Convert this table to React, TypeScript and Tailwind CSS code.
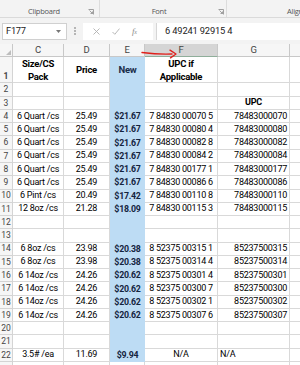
import React from "react";

type Row = {
  n: number;
  c?: string;
  d?: string;
  e?: string;
  f?: string;
  g?: string;
  gLeft?: boolean;
  gBold?: boolean;
};

const rows: Row[] = [
  { n: 2 },
  { n: 3, g: "UPC", gBold: true },
  { n: 4, c: "6 Quart /cs", d: "25.49", e: "$21.67", f: "7 84830 00070 5", g: "78483000070" },
  { n: 5, c: "6 Quart /cs", d: "25.49", e: "$21.67", f: "7 84830 00080 4", g: "78483000080" },
  { n: 6, c: "6 Quart /cs", d: "25.49", e: "$21.67", f: "7 84830 00082 8", g: "78483000082" },
  { n: 7, c: "6 Quart /cs", d: "25.49", e: "$21.67", f: "7 84830 00084 2", g: "78483000084" },
  { n: 8, c: "6 Quart /cs", d: "25.49", e: "$21.67", f: "7 84830 00177 1", g: "78483000177" },
  { n: 9, c: "6 Quart /cs", d: "25.49", e: "$21.67", f: "7 84830 00086 6", g: "78483000086" },
  { n: 10, c: "6 Pint /cs", d: "20.49", e: "$17.42", f: "7 84830 00110 8", g: "78483000110" },
  { n: 11, c: "12 8oz /cs", d: "21.28", e: "$18.09", f: "7 84830 00115 3", g: "78483000115" },
  { n: 12 },
  { n: 13 },
  { n: 14, c: "6 8oz /cs", d: "23.98", e: "$20.38", f: "8 52375 00315 1", g: "85237500315" },
  { n: 15, c: "6 8oz /cs", d: "23.98", e: "$20.38", f: "8 52375 00314 4", g: "85237500314" },
  { n: 16, c: "6 14oz /cs", d: "24.26", e: "$20.62", f: "8 52375 00301 4", g: "85237500301" },
  { n: 17, c: "6 14oz /cs", d: "24.26", e: "$20.62", f: "8 52375 00300 7", g: "85237500300" },
  { n: 18, c: "6 14oz /cs", d: "24.26", e: "$20.62", f: "8 52375 00302 1", g: "85237500302" },
  { n: 19, c: "6 14oz /cs", d: "24.26", e: "$20.62", f: "8 52375 00307 6", g: "85237500307" },
  { n: 20 },
  { n: 21 },
  { n: 22, c: "3.5# /ea", d: "11.69", e: "$9.94", f: "N/A", g: "N/A", gLeft: true },
];

const grid = "border-r border-b border-[#d9d9d9]";

function Launcher() {
  return (
    <svg width="6" height="6" viewBox="0 0 6 6" className="text-[#8a8a8a]">
      <path d="M0.5 0.5h5v5" fill="none" stroke="currentColor" strokeWidth="0.8" />
      <path d="M1.5 1.5l3 3M2.5 4.5h2v-2" fill="none" stroke="currentColor" strokeWidth="0.8" />
    </svg>
  );
}

function Ribbon() {
  return (
    <div className="flex h-[18px] bg-[#f3f3f3] border-b border-[#dadada] text-[7.5px] text-[#555] font-['Open_Sans',sans-serif]">
      <div className="w-[100px] shrink-0 flex items-center border-r border-[#dcdcdc] pt-[6px]">
        <span className="w-[88px] text-center">Clipboard</span>
        <Launcher />
      </div>
      <div className="w-[127px] shrink-0 flex items-center border-r border-[#dcdcdc] pt-[6px]">
        <span className="w-[118px] text-center">Font</span>
        <Launcher />
      </div>
      <div className="flex-1 flex items-center pt-[6px] pl-[60px] overflow-hidden whitespace-nowrap">
        Alignment
      </div>
    </div>
  );
}

function FormulaBar() {
  return (
    <div className="flex items-center h-[26px] bg-[#f3f3f3] pl-[2px] text-[9.3px] text-[#222]">
      <div className="w-[65px] h-[17px] bg-white border border-[#d0d0d0] flex items-center justify-between pl-[3px] pr-[5px]">
        <span>F177</span>
        <svg width="5" height="3" viewBox="0 0 5 3">
          <path d="M0 0h5L2.5 3z" fill="#777" />
        </svg>
      </div>
      <div className="w-[16px] flex flex-col items-center gap-[1.5px]">
        <span className="w-[1.5px] h-[1.5px] bg-[#b5b5b5]" />
        <span className="w-[1.5px] h-[1.5px] bg-[#b5b5b5]" />
        <span className="w-[1.5px] h-[1.5px] bg-[#b5b5b5]" />
      </div>
      <div className="w-[70px] h-[17px] bg-white flex items-center gap-[12px] pl-[10px] text-[#b0b0b0]">
        <svg width="7" height="7" viewBox="0 0 7 7">
          <path d="M0.5 0.5l6 6M6.5 0.5l-6 6" stroke="currentColor" strokeWidth="0.9" />
        </svg>
        <svg width="8" height="7" viewBox="0 0 8 7">
          <path d="M0.5 4l2.3 2.3L7.5 0.6" fill="none" stroke="currentColor" strokeWidth="0.9" />
        </svg>
        <span className="italic font-['Liberation_Serif',serif] text-[9px] text-[#8a8a8a]">
          f<span className="text-[6px]">x</span>
        </span>
      </div>
      <div className="flex-1 h-[17px] ml-[3px] bg-white border-l border-[#d6d6d6] flex items-center pl-[8px] tracking-[-0.15px]">
        6 49241 92915 4
      </div>
    </div>
  );
}

function ColumnHeader() {
  const hdr = "shrink-0 flex items-center justify-center border-r border-b border-[#c8c8c8] text-[#444]";
  return (
    <div className="relative flex h-[13px] bg-[#f6f6f6] text-[9.5px]">
      <div className={`w-[13px] ${hdr} items-end justify-end p-[1.5px]`}>
        <svg width="5" height="5" viewBox="0 0 5 5">
          <path d="M5 0v5H0z" fill="#bdbdbd" />
        </svg>
      </div>
      <div className={`w-[51px] ${hdr}`}>C</div>
      <div className={`w-[46px] ${hdr}`}>D</div>
      <div className={`w-[35px] ${hdr}`}>E</div>
      <div className={`w-[73px] ${hdr} bg-[#d5d5d5] border-b-[#8fae9a] text-[#3d3d3d]`}>F</div>
      <div className={`w-[72px] ${hdr}`}>G</div>
      <div className="flex-1 border-b border-[#c8c8c8]" />
      {/* hand-drawn pointer onto column F */}
      <svg className="absolute left-[141px] top-[3px]" width="40" height="12" viewBox="0 0 40 12">
        <path d="M1 5.5C9 6.5 20 7.5 31 7" fill="none" stroke="#e0201b" strokeWidth="1.4" strokeLinecap="round" />
        <path d="M29 3.2L35 7L29.5 10.8" fill="none" stroke="#e0201b" strokeWidth="1.4" strokeLinecap="round" strokeLinejoin="round" />
      </svg>
    </div>
  );
}

function RowNum({ n, tall }: { n?: number; tall?: boolean }) {
  return (
    <div
      className={`w-[13px] shrink-0 flex justify-center border-r border-b border-[#d4d4d4] bg-[#f6f6f6] text-[8.5px] text-[#444] tracking-normal ${
        tall ? "items-end pb-[2px]" : "items-center"
      }`}
    >
      {n}
    </div>
  );
}

function HeadRow() {
  return (
    <div className="flex h-[26.4px] font-bold text-[9.5px]">
      <RowNum n={1} tall />
      <div className={`w-[51px] shrink-0 ${grid} flex items-center justify-center text-center leading-[13px]`}>
        Size/CS
        <br />
        Pack
      </div>
      <div className={`w-[46px] shrink-0 ${grid} flex items-center justify-center`}>Price</div>
      <div className="w-[35px] shrink-0 bg-[#bddcf4] flex items-center justify-center text-[#1a2d4a]">New</div>
      <div className={`w-[73px] shrink-0 ${grid} flex items-center justify-center text-center leading-[13px]`}>
        UPC if
        <br />
        Applicable
      </div>
      <div className={`w-[72px] shrink-0 ${grid}`} />
      <div className="flex-1 border-b border-[#d9d9d9]" />
    </div>
  );
}

function DataRow({ r }: { r: Row }) {
  return (
    <div className="flex h-[13.28px] shrink-0">
      <RowNum n={r.n} />
      <div className={`w-[51px] shrink-0 ${grid} flex items-center justify-center whitespace-nowrap`}>{r.c}</div>
      <div className={`w-[46px] shrink-0 ${grid} flex items-center justify-center`}>{r.d}</div>
      <div className="w-[35px] shrink-0 flex items-center justify-center font-bold text-[8.8px] text-[#14243f] bg-[#bddcf4]">
        {r.e}
      </div>
      <div className={`w-[73px] shrink-0 ${grid} flex items-center justify-center whitespace-nowrap`}>{r.f}</div>
      <div
        className={`w-[72px] shrink-0 ${grid} flex items-center whitespace-nowrap ${
          r.gLeft ? "justify-start pl-[2px]" : r.gBold ? "justify-center font-bold" : "justify-end pr-[2px]"
        }`}
      >
        {r.g}
      </div>
      <div className="flex-1 border-b border-[#d9d9d9]" />
    </div>
  );
}

// trailing row, only its top sliver is in view
function TailRow() {
  return (
    <div className="flex h-[13.28px] shrink-0">
      <RowNum />
      <div className={`w-[51px] shrink-0 ${grid}`} />
      <div className={`w-[46px] shrink-0 ${grid}`} />
      <div className={`w-[35px] shrink-0 ${grid}`} />
      <div className={`w-[73px] shrink-0 ${grid}`} />
      <div className={`w-[72px] shrink-0 ${grid}`} />
      <div className="flex-1 border-b border-[#d9d9d9]" />
    </div>
  );
}

export default function App() {
  return (
    <div className="w-[300px] h-[365px] overflow-hidden bg-white text-[9px] leading-none tracking-[-0.25px] text-black font-['Roboto',sans-serif]">
      <Ribbon />
      <FormulaBar />
      <ColumnHeader />
      <HeadRow />
      {rows.map((r) => (
        <DataRow key={r.n} r={r} />
      ))}
      <TailRow />
    </div>
  );
}
